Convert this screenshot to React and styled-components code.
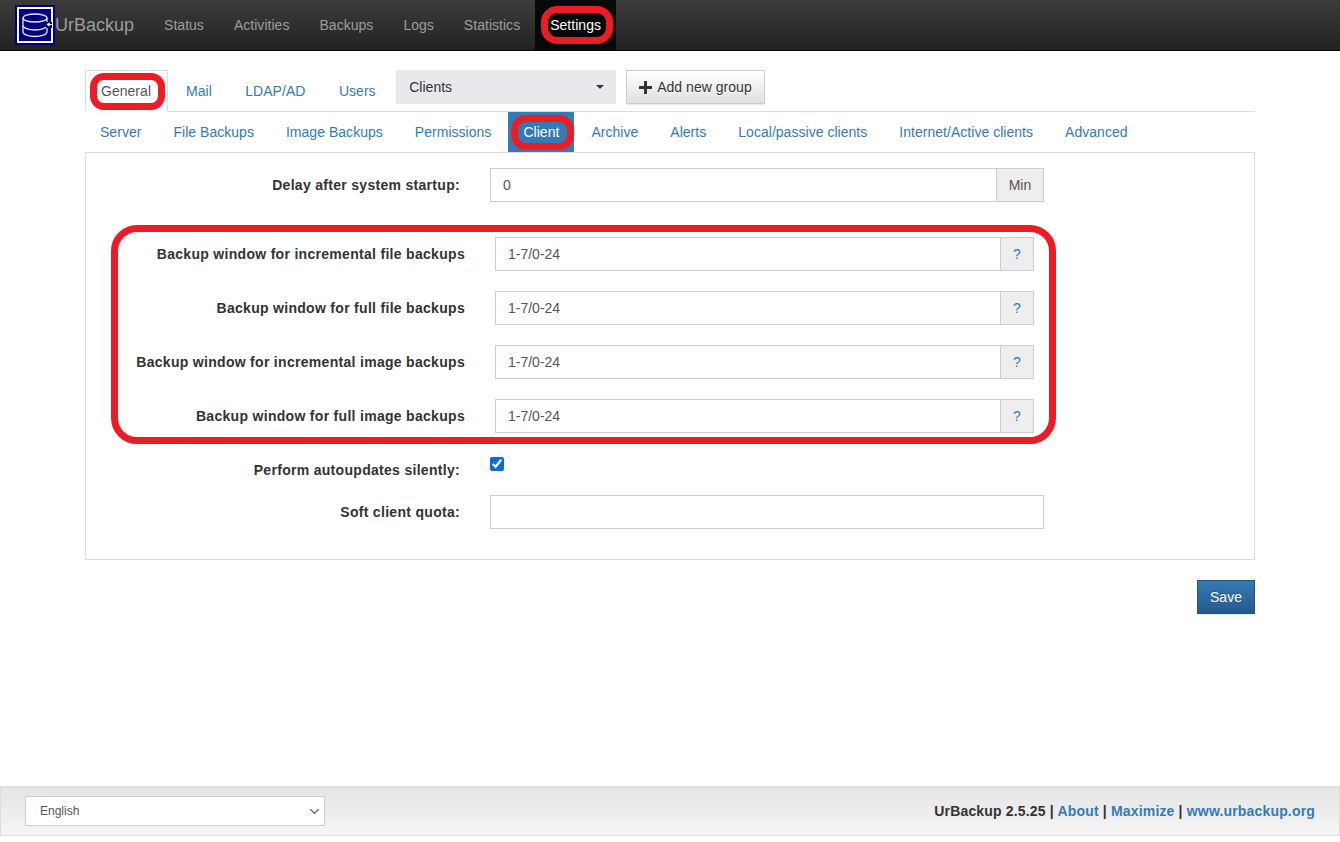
import styled, { createGlobalStyle } from 'styled-components';
import { ChevronDown } from 'lucide-react';

const navItems = ['Status', 'Activities', 'Backups', 'Logs', 'Statistics'];
const settingsTabs = ['Mail', 'LDAP/AD', 'Users'];
const pillsBefore = ['Server', 'File Backups', 'Image Backups', 'Permissions'];
const pillsAfter = ['Archive', 'Alerts', 'Local/passive clients', 'Internet/Active clients', 'Advanced'];
const windows = [
  'Backup window for incremental file backups',
  'Backup window for full file backups',
  'Backup window for incremental image backups',
  'Backup window for full image backups',
];

const Logo = () => (
  <LogoSvg viewBox="0 0 40 40" width="40" height="40">
    <rect x="0" y="0" width="40" height="40" fill="#000080" />
    <rect x="3" y="3" width="34" height="34" fill="none" stroke="#fff" strokeWidth="2" />
    <g fill="none" stroke="#e4e4f0" strokeWidth="1.3">
      <ellipse cx="20" cy="13" rx="12" ry="4" />
      <path d="M8 13v14c0 2.500 5.400 4.500 12 4.500s12-2 12-4.500V13" />
      <path d="M8 20.500c0 2.500 5.400 4.500 12 4.500s12-2 12-4.500" />
    </g>
    <rect x="31" y="17" width="6" height="6" fill="#000080" />
    <path d="M37 19.500h-4M34.500 18l-2 1.500 2 1.500" fill="none" stroke="#fff" strokeWidth="1.200" />
  </LogoSvg>
);

const App = () => {
  return (
    <>
      <GlobalStyle />
      <Page>
        <Navbar>
          <Brand>
            <Logo />
            UrBackup
          </Brand>
          {navItems.map((item) => (
            <NavItem key={item}>{item}</NavItem>
          ))}
          <NavItem active>
            Settings
            <NavRing />
          </NavItem>
        </Navbar>

        <Main>
          <TabBar>
            <Tab active>
              General
              <TabRing />
            </Tab>
            {settingsTabs.map((tab) => (
              <Tab key={tab}>{tab}</Tab>
            ))}
            <GroupSelect>
              Clients
              <Caret />
            </GroupSelect>
            <AddButton>
              <svg width="13" height="13" viewBox="0 0 13 13">
                <path d="M5 0h3v5h5v3H8v5H5V8H0V5h5z" fill="#333" />
              </svg>
              Add new group
            </AddButton>
          </TabBar>

          <Pills>
            {pillsBefore.map((pill) => (
              <Pill key={pill}>{pill}</Pill>
            ))}
            <Pill active>
              Client
              <PillRing />
            </Pill>
            {pillsAfter.map((pill) => (
              <Pill key={pill}>{pill}</Pill>
            ))}
          </Pills>

          <Panel>
            <FormRow>
              <Label>Delay after system startup:</Label>
              <InputGroup>
                <TextInput defaultValue="0" />
                <Addon>Min</Addon>
              </InputGroup>
            </FormRow>

            <WindowRing>
              {windows.map((label) => (
                <WindowRow key={label}>
                  <WindowLabel>{label}</WindowLabel>
                  <InputGroup>
                    <TextInput defaultValue="1-7/0-24" />
                    <Addon help>?</Addon>
                  </InputGroup>
                </WindowRow>
              ))}
            </WindowRing>

            <CheckRow>
              <CheckLabel>Perform autoupdates silently:</CheckLabel>
              <CheckBox type="checkbox" defaultChecked />
            </CheckRow>

            <FormRow>
              <Label>Soft client quota:</Label>
              <InputGroup>
                <TextInput defaultValue="" />
              </InputGroup>
            </FormRow>
          </Panel>

          <Actions>
            <SaveButton>Save</SaveButton>
          </Actions>
        </Main>

        <Footer>
          <LangWrap>
            <LangSelect defaultValue="English">
              <option>English</option>
            </LangSelect>
            <LangArrow size={15} strokeWidth={2} />
          </LangWrap>
          <FooterText>
            UrBackup 2.5.25 | <FooterLink>About</FooterLink> | <FooterLink>Maximize</FooterLink> |{' '}
            <FooterLink>www.urbackup.org</FooterLink>
          </FooterText>
        </Footer>
      </Page>
    </>
  );
};

const GlobalStyle = createGlobalStyle`
  * {
    box-sizing: border-box;
  }

  body {
    margin: 0;
    background: #fff;
    color: #333;
    font-family: "Liberation Sans", Arial, sans-serif;
    font-size: 14px;
    line-height: 20px;
    letter-spacing: 0.03px;
  }
`;

const Page = styled.div`
  display: flex;
  flex-direction: column;
  min-height: 842px;
`;

const Navbar = styled.nav`
  display: flex;
  align-items: stretch;
  height: 51px;
  padding-left: 15px;
  background: linear-gradient(to bottom, #3c3c3c 0%, #222 100%);
  border-bottom: 1px solid #080808;
  letter-spacing: 0.03px;
`;

const Brand = styled.div`
  display: flex;
  align-items: center;
  height: 50px;
  padding-right: 15px;
  color: #9d9d9d;
  font-size: 18px;
  letter-spacing: 0;
`;

const LogoSvg = styled.svg`
  display: block;
`;

const NavItem = styled.a`
  position: relative;
  display: flex;
  align-items: center;
  height: 50px;
  padding: 0 15px;
  color: ${(props) => (props.active ? '#fff' : '#9d9d9d')};
  background: ${(props) => (props.active ? '#080808' : 'transparent')};
`;

const NavRing = styled.span`
  position: absolute;
  left: 6px;
  right: 3px;
  top: 6px;
  bottom: 6px;
  border: 7px solid #ed1c24;
  border-radius: 16px;
`;

const Main = styled.main`
  flex: 1;
  padding: 19px 85px 0;
`;

const TabBar = styled.div`
  display: flex;
  align-items: flex-start;
  height: 42px;
  border-bottom: 1px solid #ddd;
`;

const Tab = styled.a`
  position: relative;
  min-width: ${(props) => (props.active ? '83px' : '0')};
  height: ${(props) => (props.active ? '42px' : '41px')};
  margin-right: ${(props) => (props.active ? '2px' : '1.5px')};
  padding: 10px 15px;
  border: 1px solid ${(props) => (props.active ? '#ddd' : 'transparent')};
  border-bottom-color: ${(props) => (props.active ? '#fff' : 'transparent')};
  color: ${(props) => (props.active ? '#555' : '#337ab7')};
  background: ${(props) => (props.active ? '#fff' : 'transparent')};
`;

const TabRing = styled.span`
  position: absolute;
  left: 4px;
  right: 2px;
  top: 2px;
  bottom: 1px;
  border: 7px solid #ed1c24;
  border-radius: 14px;
`;

const GroupSelect = styled.div`
  position: relative;
  width: 220px;
  height: 34px;
  margin-left: 3px;
  padding: 7px 13px;
  background: #e8e8ed;
  color: #333;
`;

const Caret = styled.span`
  position: absolute;
  right: 12px;
  top: 15px;
  border-top: 4px solid #333;
  border-left: 4px solid transparent;
  border-right: 4px solid transparent;
`;

const AddButton = styled.button`
  display: flex;
  align-items: center;
  gap: 5px;
  width: 139px;
  height: 34px;
  margin-left: 10px;
  padding: 0 12px;
  border: 1px solid #ccc;
  border-radius: 0;
  background: linear-gradient(to bottom, #fff 0%, #e0e0e0 100%);
  color: #333;
  font: inherit;
  letter-spacing: inherit;
  text-shadow: 0 1px 0 #fff;
  box-shadow: 0 1px 1px rgba(0, 0, 0, 0.08);
`;

const Pills = styled.div`
  display: flex;
  height: 40px;
`;

const Pill = styled.a`
  position: relative;
  height: 40px;
  margin-right: 2px;
  padding: 10px 15px;
  color: ${(props) => (props.active ? '#fff' : '#337ab7')};
  background: ${(props) => (props.active ? '#337ab7' : 'transparent')};
`;

const PillRing = styled.span`
  position: absolute;
  left: 3px;
  right: 0;
  top: 3px;
  bottom: 2px;
  border: 7px solid #ed1c24;
  border-radius: 15px;
`;

const Panel = styled.section`
  height: 408px;
  padding-top: 15px;
  border: 1px solid #ddd;
`;

const FormRow = styled.div`
  display: flex;
  gap: 30px;
  height: 34px;
  margin-bottom: 20px;
`;

const Label = styled.label`
  flex: none;
  width: 374px;
  padding-top: 7px;
  font-weight: bold;
  letter-spacing: 0.3px;
  text-align: right;
`;

const InputGroup = styled.div`
  display: flex;
  flex: none;
  width: 554px;
  height: 34px;
`;

const TextInput = styled.input`
  flex: 1;
  min-width: 0;
  height: 34px;
  padding: 6px 12px;
  border: 1px solid #ccc;
  border-radius: 0;
  outline: none;
  color: #555;
  font: inherit;
`;

const Addon = styled.span`
  flex: none;
  width: ${(props) => (props.help ? '34px' : '48px')};
  height: 34px;
  margin-left: -1px;
  padding: 6px 0;
  border: 1px solid #ccc;
  background: #eee;
  color: ${(props) => (props.help ? '#337ab7' : '#555')};
  text-align: center;
`;

const WindowRing = styled.div`
  width: 945px;
  height: 219px;
  margin: 23px 0 13px 25px;
  padding: 5px 15px 0 0;
  border: 7px solid #ed1c24;
  border-radius: 26px;
`;

const WindowRow = styled.div`
  display: flex;
  gap: 30px;
  height: 34px;
  margin-bottom: 20px;

  ${InputGroup} {
    width: 539px;
  }
`;

const WindowLabel = styled(Label)`
  width: 347px;
`;

const CheckRow = styled.div`
  display: flex;
  gap: 30px;
  height: 38px;
`;

const CheckLabel = styled(Label)`
  padding-top: 3px;
`;

const CheckBox = styled.input`
  width: 14px;
  height: 14px;
  margin: 0;
  accent-color: #0b6cd8;
`;

const Actions = styled.div`
  display: flex;
  justify-content: flex-end;
  margin-top: 20px;
`;

const SaveButton = styled.button`
  width: 58px;
  height: 34px;
  border: 1px solid #245580;
  border-radius: 0;
  background: linear-gradient(to bottom, #337ab7 0%, #265a88 100%);
  color: #fff;
  font: inherit;
  letter-spacing: inherit;
  text-shadow: 0 -1px 0 rgba(0, 0, 0, 0.2);
  box-shadow: 0 1px 1px rgba(0, 0, 0, 0.08);
`;

const Footer = styled.footer`
  display: flex;
  align-items: center;
  justify-content: space-between;
  height: 50px;
  margin-bottom: 6px;
  padding: 0 24px 0 24px;
  border: 1px solid #ddd;
  background: linear-gradient(to bottom, #e5e5e5 0%, #f5f5f5 100%);
`;

const LangWrap = styled.div`
  position: relative;
  width: 300px;
  height: 30px;
`;

const LangSelect = styled.select`
  display: block;
  width: 300px;
  height: 30px;
  padding: 5px 14px;
  border: 1px solid #ccc;
  border-radius: 0;
  background-color: #fff;
  color: #555;
  font: 12px "Liberation Sans", Arial, sans-serif;
  appearance: none;
`;

const LangArrow = styled(ChevronDown)`
  position: absolute;
  right: 3px;
  top: 8px;
  color: #555;
  pointer-events: none;
`;

const FooterText = styled.div`
  font-weight: bold;
  letter-spacing: 0.17px;
`;

const FooterLink = styled.a`
  color: #337ab7;
`;

export default App;
